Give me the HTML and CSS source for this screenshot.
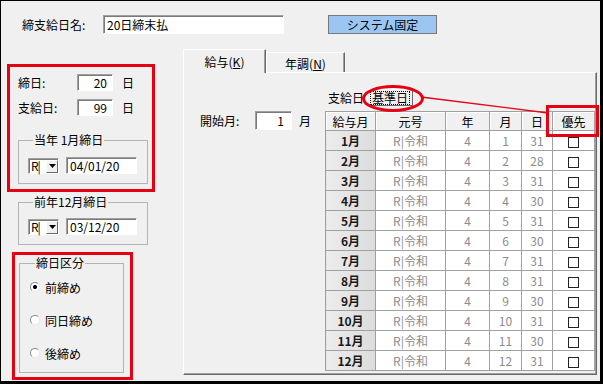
FILE: index.html
```html
<!DOCTYPE html>
<html lang="ja">

<head>
    <meta charset="UTF-8">
    <meta name="viewport" content="width=device-width, initial-scale=1.0">
    <link rel="stylesheet" href="styles.css">
    <title>締支給日設定</title>
</head>

<body>
    <div class="window">
        <div class="top-row">
            <span class="name-label">締支給日名:</span>
            <input class="text-box name-box" type="text" value="20日締末払">
            <button class="fixed-btn">システム固定</button>
        </div>
        <div class="main">
            <div class="left">
                <div class="mark mark-dates">
                    <div class="field-row">
                        <span class="field-label">締日:</span>
                        <input class="text-box day-box" type="text" value="20">
                        <span class="unit">日</span>
                    </div>
                    <div class="field-row second">
                        <span class="field-label">支給日:</span>
                        <input class="text-box day-box" type="text" value="99">
                        <span class="unit">日</span>
                    </div>
                    <fieldset class="group date-group this-year">
                        <legend>当年 1月締日</legend>
                        <div class="date-row">
                            <div class="combo">
                                <span class="combo-text">R|</span>
                                <span class="combo-btn">
                                    <svg width="7" height="4" viewBox="0 0 7 4"><path d="M0 0h7L3.5 4z" fill="#000"/></svg>
                                </span>
                            </div>
                            <input class="text-box date-box" type="text" value="04/01/20">
                        </div>
                    </fieldset>
                </div>
                <fieldset class="group date-group last-year">
                    <legend>前年12月締日</legend>
                    <div class="date-row">
                        <div class="combo">
                            <span class="combo-text">R|</span>
                            <span class="combo-btn">
                                <svg width="7" height="4" viewBox="0 0 7 4"><path d="M0 0h7L3.5 4z" fill="#000"/></svg>
                            </span>
                        </div>
                        <input class="text-box date-box" type="text" value="03/12/20">
                    </div>
                </fieldset>
                <div class="mark mark-kind">
                    <fieldset class="group kind-group">
                        <legend>締日区分</legend>
                        <label class="radio-row"><span class="radio checked"></span>前締め</label>
                        <label class="radio-row"><span class="radio"></span>同日締め</label>
                        <label class="radio-row"><span class="radio"></span>後締め</label>
                    </fieldset>
                </div>
            </div>
            <div class="right">
                <div class="tabs">
                    <div class="tab active">給与(<u>K</u>)</div>
                    <div class="tab">年調(<u>N</u>)</div>
                </div>
                <div class="panel">
                    <div class="start-month">
                        <span class="start-label">開始月:</span>
                        <input class="text-box month-box" type="text" value="1">
                        <span class="unit">月</span>
                    </div>
                    <div class="table-block">
                        <div class="switch-row">
                            <span class="switch-label">支給日</span>
                            <span class="switch-btn"><span class="focus">基準日</span></span>
                        </div>
                        <table class="pay-table">
                            <colgroup>
                                <col style="width: 50px">
                                <col style="width: 70px">
                                <col style="width: 44px">
                                <col style="width: 32px">
                                <col style="width: 31px">
                                <col style="width: 42px">
                            </colgroup>
                            <thead>
                                <tr>
                                    <th>給与月</th>
                                    <th>元号</th>
                                    <th>年</th>
                                    <th>月</th>
                                    <th>日</th>
                                    <th>優先</th>
                                </tr>
                            </thead>
                            <tbody>
                                <tr><td class="month">1月</td><td>R|令和</td><td>4</td><td>1</td><td>31</td><td><span class="check"></span></td></tr>
                                <tr><td class="month">2月</td><td>R|令和</td><td>4</td><td>2</td><td>28</td><td><span class="check"></span></td></tr>
                                <tr><td class="month">3月</td><td>R|令和</td><td>4</td><td>3</td><td>31</td><td><span class="check"></span></td></tr>
                                <tr><td class="month">4月</td><td>R|令和</td><td>4</td><td>4</td><td>30</td><td><span class="check"></span></td></tr>
                                <tr><td class="month">5月</td><td>R|令和</td><td>4</td><td>5</td><td>31</td><td><span class="check"></span></td></tr>
                                <tr><td class="month">6月</td><td>R|令和</td><td>4</td><td>6</td><td>30</td><td><span class="check"></span></td></tr>
                                <tr><td class="month">7月</td><td>R|令和</td><td>4</td><td>7</td><td>31</td><td><span class="check"></span></td></tr>
                                <tr><td class="month">8月</td><td>R|令和</td><td>4</td><td>8</td><td>31</td><td><span class="check"></span></td></tr>
                                <tr><td class="month">9月</td><td>R|令和</td><td>4</td><td>9</td><td>30</td><td><span class="check"></span></td></tr>
                                <tr><td class="month">10月</td><td>R|令和</td><td>4</td><td>10</td><td>31</td><td><span class="check"></span></td></tr>
                                <tr><td class="month">11月</td><td>R|令和</td><td>4</td><td>11</td><td>30</td><td><span class="check"></span></td></tr>
                                <tr><td class="month">12月</td><td>R|令和</td><td>4</td><td>12</td><td>31</td><td><span class="check"></span></td></tr>
                            </tbody>
                        </table>
                    </div>
                </div>
            </div>
        </div>
        <!-- red callouts drawn over the dialog -->
        <svg class="marks" width="603" height="384" viewBox="0 0 603 384">
            <ellipse cx="393" cy="98.5" rx="29.5" ry="12" fill="none" stroke="#e60012" stroke-width="3"/>
            <line x1="421" y1="97" x2="548" y2="113" stroke="#e60012" stroke-width="1.3"/>
            <rect x="547.5" y="106.5" width="50" height="29" fill="none" stroke="#e60012" stroke-width="3"/>
        </svg>
    </div>
</body>

</html>
```

FILE: styles.css
```css
* {
    box-sizing: border-box;
    margin: 0;
    padding: 0;
}

body {
    font-family: "Noto Sans CJK JP", sans-serif;
    font-size: 12px;
    color: #000;
    background: #fff;
}

.window {
    position: relative;
    width: 603px;
    height: 384px;
    background: #f0f0f0;
    border: solid #000;
    border-width: 1px 3px 3px 1px;
}

.top-row {
    display: flex;
    align-items: flex-start;
    height: 40px;
    padding: 14px 0 0 21px;
}

.name-label {
    width: 81px;
    line-height: 19px;
}

.text-box {
    font-family: inherit;
    font-size: 12px;
    color: #000;
    background: #fff;
    border: 1px solid;
    border-color: #a0a0a0 #fff #fff #a0a0a0;
    box-shadow: inset 1px 1px 0 #7a7a7a;
    outline: none;
    padding: 0 3px;
    line-height: 15px;
}

.name-box {
    width: 181px;
    height: 19px;
    padding-left: 3px;
}

.fixed-btn {
    width: 109px;
    height: 19px;
    margin-left: 44px;
    font-family: inherit;
    font-size: 12px;
    line-height: 16px;
    background: #9cc6f2;
    border: 1px solid #7a7a7a;
    color: #000;
}

.main {
    display: flex;
    height: 340px;
}

.left {
    width: 182px;
    padding: 23px 0 0 6px;
}

.mark {
    border: 3px solid #e60012;
}

.mark-dates {
    width: 148px;
    height: 128px;
    padding: 7px 0 0 8px;
}

.field-row {
    display: flex;
    align-items: center;
    height: 17px;
}

.field-row.second {
    margin-top: 8px;
}

.field-label {
    width: 59px;
}

.day-box {
    width: 36px;
    height: 17px;
    text-align: right;
    padding-right: 5px;
}

.unit {
    margin-left: 9px;
}

.group {
    min-inline-size: 0;
    border: 1px solid #b4b4b4;
}

.group legend {
    margin-left: 5px;
    padding: 0 1px;
    line-height: 14px;
}

.date-group {
    width: 130px;
    padding: 10px 0 9px 9px;
}

.this-year {
    margin-top: 17px;
}

.last-year {
    margin: 3px 0 0 11px;
    padding-top: 9px;
}

.date-row {
    display: flex;
    align-items: center;
    height: 17px;
}

.combo {
    display: flex;
    width: 31px;
    height: 16px;
    background: #fff;
    border: 1px solid;
    border-color: #a0a0a0 #fff #fff #a0a0a0;
    box-shadow: inset 1px 1px 0 #7a7a7a;
}

.combo-text {
    width: 17px;
    padding-left: 2px;
    line-height: 14px;
    white-space: nowrap;
    letter-spacing: -1px;
}

.combo-btn {
    display: flex;
    align-items: center;
    justify-content: center;
    width: 12px;
    margin-top: 1px;
    background: #f0f0f0;
    border: 1px solid;
    border-color: #fff #696969 #696969 #fff;
}

.date-box {
    width: 71px;
    height: 17px;
    margin-left: 7px;
    padding-left: 3px;
}

.mark-kind {
    width: 121px;
    height: 128px;
    margin: 7px 0 0 5px;
    padding: 1px 0 0 4px;
}

.kind-group {
    width: 105px;
    padding: 9px 0 11px 10px;
}

.radio-row {
    display: flex;
    align-items: center;
    gap: 5px;
    height: 16px;
}

.radio-row + .radio-row {
    margin-top: 17px;
}

.radio {
    width: 10px;
    height: 10px;
    border-radius: 50%;
    border: 1px solid;
    border-color: #8a8a8a #e6e6e6 #e6e6e6 #8a8a8a;
    background: #fff;
}

.radio.checked {
    background: radial-gradient(circle, #000 0 1.6px, #fff 2.4px);
}

.right {
    flex: 1;
    display: flex;
    flex-direction: column;
    padding: 8px 3px 6px 0;
}

.tabs {
    display: flex;
    align-items: flex-end;
    height: 24px;
    margin-bottom: -1px;
}

.tab {
    display: flex;
    align-items: center;
    justify-content: center;
    width: 79px;
    height: 21px;
    border: 1px solid;
    border-bottom: none;
    border-color: #fff #696969 #fff #fff;
    box-shadow: inset -1px 0 0 #a0a0a0;
}

.tab.active {
    position: relative;
    z-index: 1;
    width: 83px;
    height: 24px;
    background: #f0f0f0;
}

.panel {
    flex: 1;
    display: flex;
    border: 1px solid;
    border-color: #fff #696969 #696969 #fff;
    box-shadow: inset -1px -1px 0 #a0a0a0;
}

.start-month {
    display: flex;
    align-items: flex-start;
    width: 141px;
    padding: 38px 0 0 16px;
}

.start-label {
    width: 55px;
    line-height: 19px;
}

.month-box {
    width: 37px;
    height: 19px;
    text-align: right;
    padding-right: 7px;
}

.start-month .unit {
    margin-left: 7px;
    line-height: 19px;
}

.table-block {
    padding-top: 16px;
}

.switch-row {
    display: flex;
    align-items: center;
    height: 17px;
    padding-left: 3px;
}

.switch-btn {
    display: flex;
    align-items: center;
    justify-content: center;
    width: 46px;
    height: 17px;
    margin-left: 3px;
    background: #f0f0f0;
    border: 1px solid;
    border-color: #fff #696969 #696969 #fff;
}

.focus {
    padding: 0 1px;
    line-height: 12px;
    border: 1px dotted #000;
}

.pay-table {
    width: 269px;
    margin-top: 5px;
    table-layout: fixed;
    border-collapse: collapse;
}

.pay-table th,
.pay-table td {
    padding: 0;
    border: 1px solid #a0a0a0;
    text-align: center;
    font-weight: normal;
}

.pay-table th {
    height: 19px;
    line-height: 17px;
    background: #f0f0f0;
    box-shadow: inset 1px 1px 0 #fff;
}

.pay-table td {
    height: 20px;
    line-height: 18px;
    color: #8c8c8c;
    background: #fff;
}

.pay-table td.month {
    color: #1a1a1a;
    font-weight: bold;
    background: linear-gradient(to right, #ececec, #dcdcdc);
}

.check {
    display: inline-block;
    width: 11px;
    height: 11px;
    vertical-align: middle;
    border: 1px solid #222;
    background: #fff;
}

.marks {
    position: absolute;
    top: -1px;
    left: -1px;
    pointer-events: none;
}
```
